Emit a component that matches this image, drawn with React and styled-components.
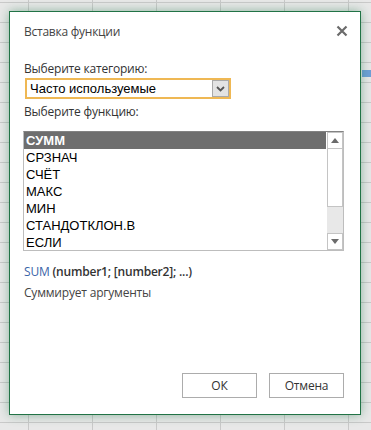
import React from "react";
import styled, { createGlobalStyle } from "styled-components";

const GlobalStyle = createGlobalStyle`
  html, body {
    margin: 0;
    padding: 0;
  }
  body {
    width: 371px;
    height: 430px;
    overflow: hidden;
    background-color: #e8e8e8;
    background-image:
      linear-gradient(#6fa0d8, #6fa0d8),
      linear-gradient(to right, #c9c9c9 1px, transparent 1px),
      linear-gradient(to bottom, #c9c9c9 1px, transparent 1px);
    background-size: 9px 7px, 64px 100%, 100% 20px;
    background-position: 362px 70px, 28px 0, 0 2px;
    background-repeat: no-repeat, repeat-x, repeat-y;
    font-family: "Segoe UI", "Open Sans", "Noto Sans", sans-serif;
  }
`;

const Dialog = styled.div`
  box-sizing: border-box;
  width: 352px;
  height: 404px;
  margin: 11px 0 0 9px;
  background: #fff;
  border: 1px solid #217346;
  box-shadow: 0 0 10px rgba(33, 115, 70, 0.45);
  display: flex;
  flex-direction: column;
  padding: 0 16px 16px 13px;
`;

const Header = styled.div`
  height: 40px;
  display: flex;
  justify-content: space-between;
  align-items: flex-start;
  padding-top: 12px;
  box-sizing: border-box;
`;

const Title = styled.div`
  font-size: 12px;
  line-height: 16px;
  color: #444;
  padding-left: 1px;
  letter-spacing: -0.25px;
`;

const Close = styled.div`
  width: 12px;
  height: 12px;
  margin-right: -4px;
  margin-top: 1px;
  display: flex;
`;

const Label = styled.div`
  font-size: 12px;
  line-height: 16px;
  color: #333;
  margin-top: ${p => p.$top}px;
  padding-left: 1px;
  letter-spacing: -0.2px;
`;

const Select = styled.div`
  box-sizing: border-box;
  width: 206px;
  height: 21px;
  margin: 1px 0 0 2px;
  border: 2px solid #efb854;
  background: #fff;
  display: flex;
  align-items: center;
  justify-content: space-between;
  font-family: "Liberation Sans", Arial, sans-serif;
  font-size: 13px;
  color: #000;
  padding-left: 3px;
`;

const DropButton = styled.div`
  box-sizing: border-box;
  width: 17px;
  height: 17px;
  background: #e3e3e3;
  border: 1px solid #a9a9a9;
  display: flex;
  align-items: center;
  justify-content: center;
`;

const ListBox = styled.div`
  box-sizing: border-box;
  width: 321px;
  height: 120px;
  margin-top: 11px;
  border: 1px solid #bdbdbd;
  border-top-color: #828282;
  display: flex;
  font-family: "Liberation Sans", Arial, sans-serif;
  font-size: 13px;
`;

const Items = styled.div`
  flex: 1;
  display: flex;
  flex-direction: column;
`;

const Item = styled.div`
  height: 17px;
  line-height: 17px;
  padding-left: 2px;
  color: ${p => (p.$selected ? "#fff" : "#000")};
  background: ${p => (p.$selected ? "#6e6e6e" : "transparent")};
  font-weight: ${p => (p.$selected ? "bold" : "normal")};
`;

const ScrollBar = styled.div`
  width: 16px;
  display: flex;
  flex-direction: column;
  background: #e8e8e8;
  border-left: 1px solid #fff;
`;

const ScrollArrow = styled.div`
  box-sizing: border-box;
  height: 17px;
  background: #fff;
  border: 1px solid #c4c4c4;
  display: flex;
  align-items: center;
  justify-content: center;
`;

const Thumb = styled.div`
  box-sizing: border-box;
  height: 58px;
  background: #fff;
  border: 1px solid #c4c4c4;
  border-top: none;
`;

const Track = styled.div`
  flex: 1;
`;

const Signature = styled.div`
  font-size: 12px;
  line-height: 16px;
  margin-top: 13px;
  padding-left: 1px;
  color: #333;
  letter-spacing: -0.2px;
  b {
    font-weight: 600;
  }
`;

const FnName = styled.span`
  color: #3b64a8;
`;

const Description = styled.div`
  font-size: 12px;
  line-height: 16px;
  margin-top: 5px;
  padding-left: 1px;
  color: #444;
  letter-spacing: -0.2px;
`;

const Footer = styled.div`
  margin-top: auto;
  display: flex;
  justify-content: flex-end;
  gap: 12px;
`;

const Button = styled.div`
  box-sizing: border-box;
  width: 75px;
  height: 25px;
  border: 1px solid #acacac;
  background: #fff;
  display: flex;
  align-items: center;
  justify-content: center;
  font-size: 12px;
  color: #333;
  letter-spacing: -0.2px;
`;

const functions = ["СУММ", "СРЗНАЧ", "СЧЁТ", "МАКС", "МИН", "СТАНДОТКЛОН.В", "ЕСЛИ"];

export default function App() {
  return (
    <>
      <GlobalStyle />
      <Dialog>
        <Header>
          <Title>Вставка функции</Title>
          <Close>
            <svg width="12" height="12" viewBox="0 0 12 12">
              <path d="M1.5 1.5L10.5 10.5M10.5 1.5L1.5 10.5" stroke="#6b6b6b" strokeWidth="2.2" />
            </svg>
          </Close>
        </Header>
        <Label $top={9}>Выберите категорию:</Label>
        <Select>
          <span>Часто используемые</span>
          <DropButton>
            <svg width="9" height="6" viewBox="0 0 9 6">
              <path d="M1 1L4.5 4.5L8 1" fill="none" stroke="#555" strokeWidth="1.8" />
            </svg>
          </DropButton>
        </Select>
        <Label $top={5}>Выберите функцию:</Label>
        <ListBox>
          <Items>
            {functions.map((f, i) => (
              <Item key={f} $selected={i === 0}>
                {f}
              </Item>
            ))}
          </Items>
          <ScrollBar>
            <ScrollArrow>
              <svg width="8" height="5" viewBox="0 0 8 5">
                <path d="M0 5L4 0L8 5Z" fill="#6b6b6b" />
              </svg>
            </ScrollArrow>
            <Thumb />
            <Track />
            <ScrollArrow>
              <svg width="8" height="5" viewBox="0 0 8 5">
                <path d="M0 0L4 5L8 0Z" fill="#6b6b6b" />
              </svg>
            </ScrollArrow>
          </ScrollBar>
        </ListBox>
        <Signature>
          <FnName>SUM</FnName> <b>(number1; [number2]; ...)</b>
        </Signature>
        <Description>Суммирует аргументы</Description>
        <Footer>
          <Button>ОК</Button>
          <Button>Отмена</Button>
        </Footer>
      </Dialog>
    </>
  );
}
